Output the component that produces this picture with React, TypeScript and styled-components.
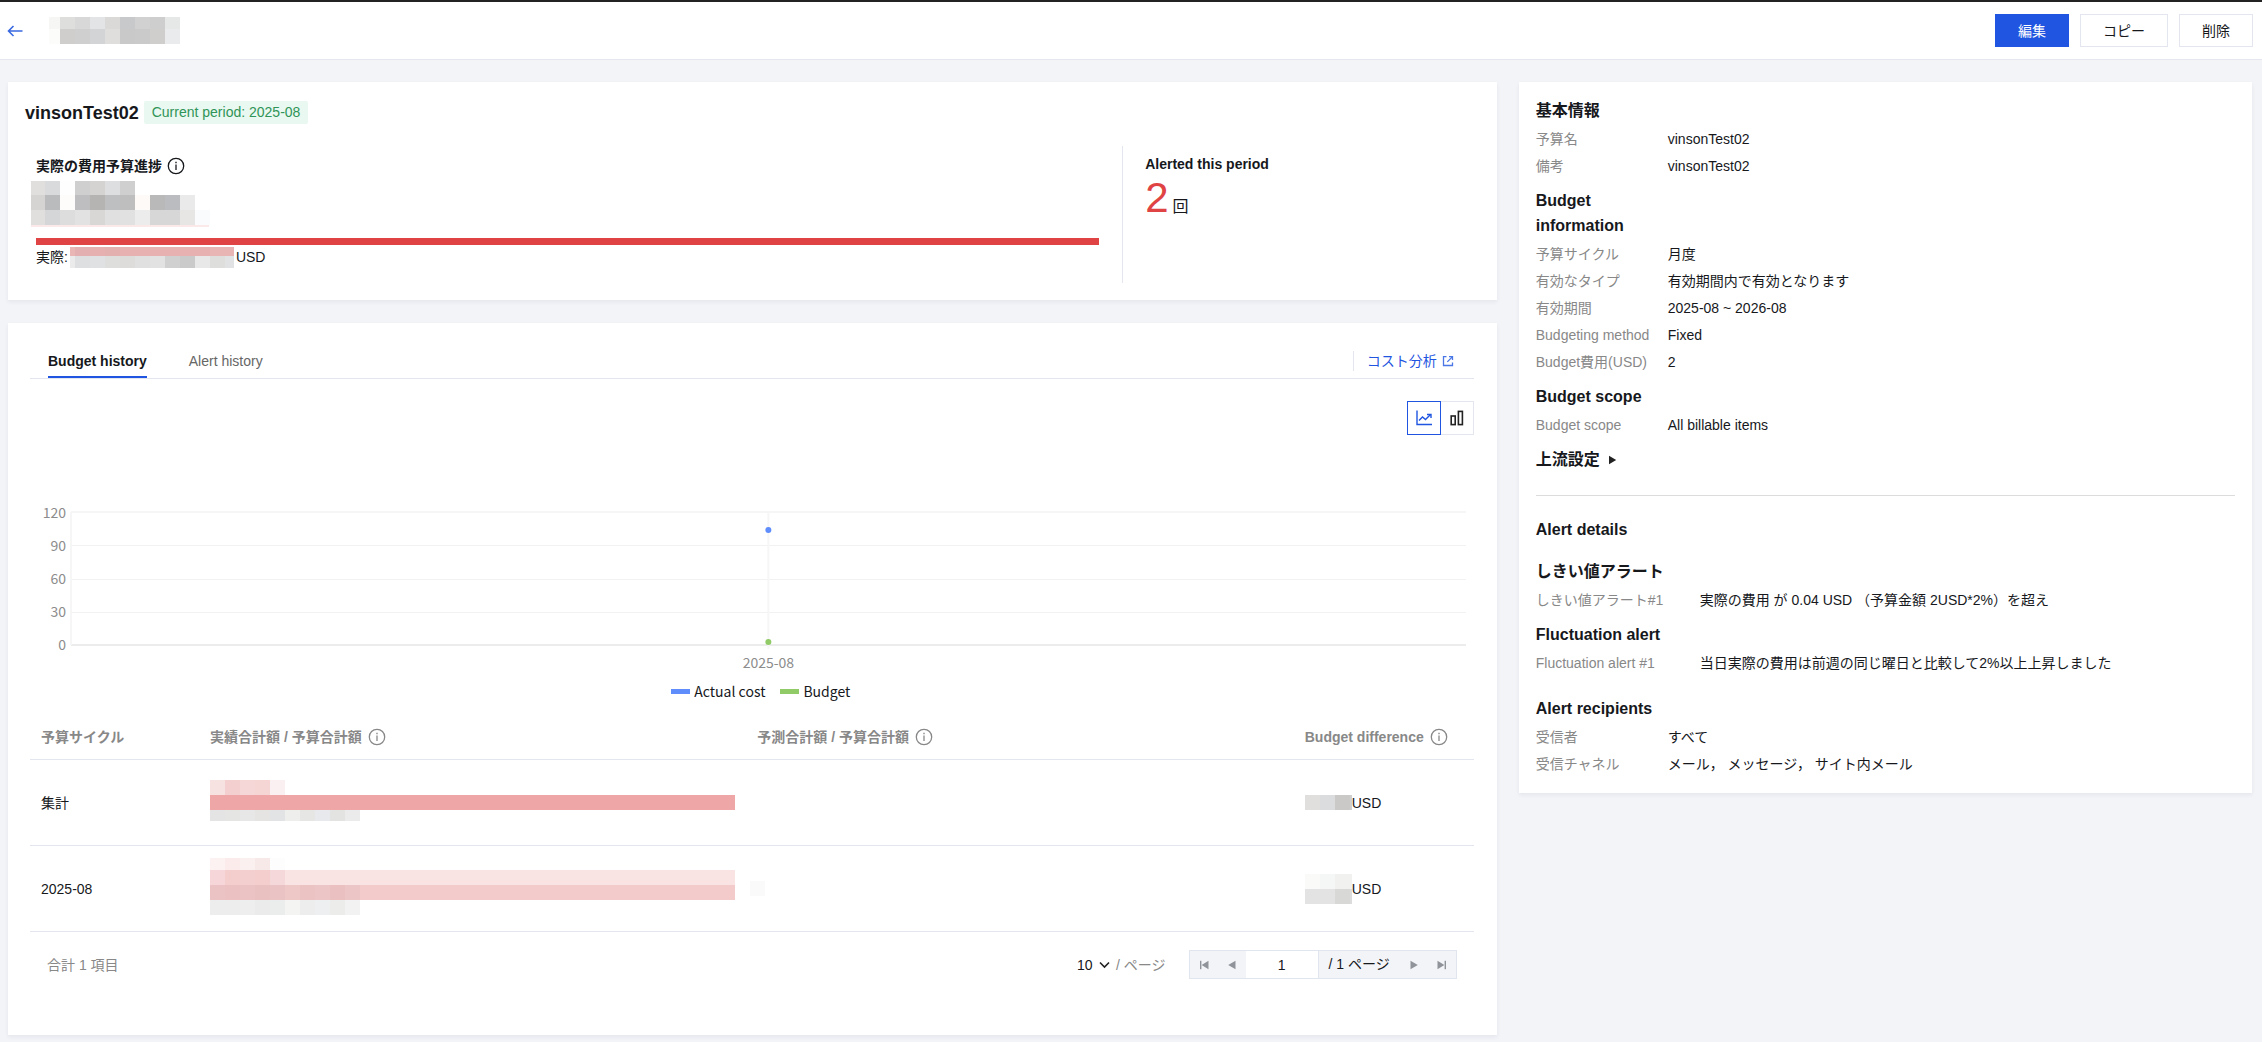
import React, { useState } from "react";
import styled, { createGlobalStyle } from "styled-components";

const GlobalStyle = createGlobalStyle`
  *, *::before, *::after { box-sizing: border-box; }
  body {
    margin: 0;
    background: #f3f4f8;
    color: #16181c;
    font-family: "Liberation Sans", "Noto Sans CJK JP", sans-serif;
    font-size: 14px;
    line-height: 20px;
  }
  button, input, select { font: inherit; color: inherit; }
  h1, h2, h3, dl, dd, p { margin: 0; }
`;

/* ---------- masked values ---------- */

type Cell = [width: number, color: string];
type MaskRow = [height: number, cells: Cell[]];

const MaskBox = styled.span<{ $fill?: boolean }>`
  display: inline-flex;
  flex-direction: column;
  flex: none;
  width: ${(p) => (p.$fill ? "100%" : "auto")};
`;
const MaskLine = styled.span<{ $h: number }>`
  display: flex;
  height: ${(p) => p.$h}px;
`;
const MaskCell = styled.span<{ $w: number; $c: string }>`
  flex: ${(p) => (p.$w ? `0 0 ${p.$w}px` : "1 1 0")};
  background: ${(p) => p.$c};
`;

const Mask = ({ rows, fill }: { rows: MaskRow[]; fill?: boolean }) => (
  <MaskBox $fill={fill} aria-hidden="true">
    {rows.map(([h, cells], i) => (
      <MaskLine key={i} $h={h}>
        {cells.map(([w, c], j) => (
          <MaskCell key={j} $w={w} $c={c} />
        ))}
      </MaskLine>
    ))}
  </MaskBox>
);

const tiles = (first: number, ...colors: string[]): Cell[] =>
  colors.map((c, i) => [i === 0 ? first : 15, c]);

const titleMask: MaskRow[] = [
  [12, tiles(11, "#f6f6f4", "#dededc", "#d8d8d8", "#e2e4e6", "#dad9d7", "#c8c9cb", "#d1d1d1", "#cecece", "#e6e8e7")],
  [15, tiles(11, "#fcfcfa", "#cfcecc", "#cfcfcf", "#d3d4d6", "#dfdedd", "#c9c9c9", "#cacaca", "#cfcecc", "#e9ebec")],
];
const amountMask: MaskRow[] = [
  [14, tiles(14, "#e0dfde", "#d8dadb", "#fefefe", "#cfcfcf", "#d4d3d1", "#dddee0", "#cfcfcf")],
  [15, tiles(14, "#d5d4d2", "#babbbd", "#fdfcfb", "#bebec0", "#b5b4b2", "#bebfc1", "#bebebf", "#fefaf7", "#b9b9b9", "#bbbcc0", "#eaeaea")],
  [15, tiles(14, "#e0dfde", "#d4d6d8", "#dddddd", "#e2e2e2", "#d8d7d5", "#e0e0e0", "#e1e1e1", "#ececec", "#d7d7d7", "#d7d7d7", "#e7e6e5", "#fafbfd")],
  [2, [[178, "#fbe8e8"]]],
];
const actualMask: MaskRow[] = [
  [9, [[5, "#e9b5b5"], [15, "#e4afb0"], [15, "#e6b0b0"], [15, "#e4afaf"], [90, "#e7b1b1"], [24, "#e8b4b4"]]],
  [12, [[5, "#ebebeb"], [15, "#dedfe1"], [15, "#e0e1e3"], [15, "#dededd"], [15, "#dddcdb"], [15, "#e0e0e0"], [15, "#e2e2e2"], [15, "#d1d0d1"], [15, "#cacacb"], [15, "#e9e8e8"], [15, "#dededd"], [9, "#e1e2e3"]]],
];
const totalMask: MaskRow[] = [
  [15, tiles(15, "#f7e2e2", "#f4cfcf", "#f6d7d8", "#f5d6d5", "#fbf0f1")],
  [15, [[0, "#efa6a6"]]],
  [11, tiles(15, "#e4e4e4", "#e5e5e3", "#e7e7e7", "#e5e4e3", "#e1e3e5", "#eeeeed", "#e6e6e4", "#e8e9ec", "#e3e4e2", "#ebebeb")],
];
const monthMask: MaskRow[] = [
  [12, tiles(15, "#fdf2f2", "#fbebeb", "#fbf0f0", "#f8e9e9", "#fefdfd")],
  [15, [...tiles(15, "#f6d6d8", "#f4cdcd", "#f4cfcf", "#f4cdcd", "#f5d8d9"), [0, "#f9e4e3"]]],
  [15, [...tiles(15, "#ecc3c5", "#ebc1c1", "#ecc3c4", "#eac1c1", "#eac3c4", "#eec7c7", "#ebc3c3", "#ecc5c6", "#eac0c0", "#ecc6c6"), [0, "#f4cbcb"]]],
  [15, tiles(15, "#ededed", "#ededed", "#eeeeee", "#ebebeb", "#ebecec", "#f4f4f3", "#ededed", "#eeeff1", "#ececea", "#f2f2f2")],
];
const forecastMask: MaskRow[] = [[15, [[15, "#fafafa"]]]];
const totalDiffMask: MaskRow[] = [
  [15, [[15, "#e0dfdd"], [15, "#dadcde"], [15, "#cac9c8"], [2, "#cfcfcf"]]],
];
const monthDiffMask: MaskRow[] = [
  [15, [[15, "#fafaf9"], [15, "#f5f7f7"], [17, "#f1f1f0"]]],
  [15, [[30, "#e3e3e3"], [15, "#d8d8d6"], [2, "#dcdcdc"]]],
];

/* ---------- icons ---------- */

const Glyph = styled.svg`
  display: block;
  flex: none;
`;

const InfoIcon = ({ size = 18 }: { size?: number }) => (
  <Glyph width={size} height={size} viewBox="0 0 18 18" fill="none" stroke="currentColor">
    <circle cx="9" cy="9" r="7.7" strokeWidth="1.3" />
    <path d="M9 7.5V13" strokeWidth="1.3" />
    <path d="M9 4.7V6.3" strokeWidth="1.4" />
  </Glyph>
);

const BackIcon = () => (
  <Glyph width="16" height="14" viewBox="0 0 16 14" fill="none" stroke="#3a68e0" strokeWidth="1.6">
    <path d="M15.5 7H1.8M6.5 2L1.5 7L6.5 12" />
  </Glyph>
);

const ExternalIcon = () => (
  <Glyph width="12" height="12" viewBox="0 0 12 12" fill="none" stroke="#4a76e6" strokeWidth="1.3">
    <path d="M4.5 1.7H1.5V10.5H10.5V7.5" />
    <path d="M7 1.7H10.5V5M10.3 1.9L5.3 6.9" />
  </Glyph>
);

const LineIcon = () => (
  <Glyph width="18" height="18" viewBox="0 0 18 18" fill="none" stroke="currentColor" strokeWidth="1.4">
    <path d="M2 1.5V15.5H17" />
    <path d="M4 11.5L7.5 8L10.5 10.5L15.5 5.5" />
    <path d="M12 5.5H16V9" />
  </Glyph>
);

const BarIcon = () => (
  <Glyph width="16" height="18" viewBox="0 0 16 18" fill="none" stroke="currentColor" strokeWidth="1.6">
    <rect x="2.2" y="7" width="4" height="8.6" />
    <rect x="9.4" y="2.4" width="4" height="13.2" />
  </Glyph>
);

const PagerIcon = ({ back, edge }: { back?: boolean; edge?: boolean }) => (
  <Glyph width="10" height="10" viewBox="0 0 10 10" fill="currentColor" transform={back ? "scale(-1 1)" : undefined}>
    <path d={edge ? "M0.5 0.8V9.2L7.4 5Z" : "M1.5 0.8V9.2L8.8 5Z"} />
    {edge && <rect x="7.6" y="0.8" width="1.4" height="8.4" />}
  </Glyph>
);

const ChevronIcon = styled(Glyph)`
  margin-left: 6px;
  pointer-events: none;
`;

/* ---------- header ---------- */

const TopBar = styled.header`
  display: flex;
  align-items: center;
  height: 60px;
  padding: 0 9px 0 7px;
  background: #fff;
  border-top: 2px solid #232323;
  border-bottom: 1px solid #e4e7ee;
`;
const BackLink = styled.a`
  display: block;
  margin-right: 26px;
`;
const Actions = styled.div`
  display: flex;
  gap: 11px;
  margin-left: auto;
`;
const ActionButton = styled.button<{ $primary?: boolean }>`
  height: 33px;
  padding: 0 22px;
  border: 1px solid ${(p) => (p.$primary ? "#1f55e0" : "#e3e6ee")};
  background: ${(p) => (p.$primary ? "#1f55e0" : "#fff")};
  color: ${(p) => (p.$primary ? "#fff" : "inherit")};
`;

/* ---------- page frame ---------- */

const Page = styled.main`
  display: grid;
  grid-template-columns: 67fr 33fr;
  align-items: start;
  gap: 22px;
  padding: 22px 10px 7px 8px;
`;
const Column = styled.div`
  display: grid;
  gap: 23px;
  min-width: 0;
`;
const Card = styled.section`
  background: #fff;
  box-shadow: 0 2px 4px rgba(54, 58, 80, 0.07);
  min-width: 0;
`;

/* ---------- summary card ---------- */

const SummaryCard = styled(Card)`
  padding: 18px 22px 17px 17px;
`;
const TitleRow = styled.div`
  display: flex;
  align-items: center;
  gap: 5px;
  height: 25px;
`;
const Title = styled.h1`
  font-size: 18px;
  line-height: 24px;
`;
const Tag = styled.span`
  padding: 0 8px;
  line-height: 23px;
  border-radius: 2px;
  background: #e9f8f1;
  color: #2f9457;
`;
const SummaryBody = styled.div`
  display: grid;
  grid-template-columns: 303fr 97fr;
  margin-top: 21px;
`;
const Progress = styled.div`
  padding: 10px 23px 0 11px;
  min-height: 137px;
  border-right: 1px solid #e3e5ef;
`;
const SubTitle = styled.h2`
  display: flex;
  align-items: center;
  gap: 5px;
  font-size: 14px;
  line-height: 20px;
`;
const Amount = styled.div`
  display: flex;
  margin: 5px 0 11px -5px;
`;
const ProgressBar = styled.div`
  height: 7px;
  background: #e04343;
`;
const ActualLine = styled.div`
  display: flex;
  align-items: center;
  gap: 2px;
  height: 24px;
`;
const Alerted = styled.div`
  padding: 8px 0 0 22px;
`;
const AlertCount = styled.p`
  display: flex;
  align-items: baseline;
  gap: 4px;
  font-size: 16px;
  line-height: 48px;
`;
const CountNumber = styled.span`
  font-size: 42px;
  color: #e04343;
`;

/* ---------- history card ---------- */

const HistoryCard = styled(Card)`
  padding: 22px 23px 56px 22px;
`;
const TabBar = styled.div`
  display: flex;
  height: 34px;
  padding: 0 20px 0 18px;
  border-bottom: 1px solid #e3e6ef;
`;
const TabList = styled.div`
  display: flex;
  gap: 42px;
`;
const Tab = styled.button<{ $on: boolean }>`
  padding: 0;
  border: 0;
  border-bottom: 2px solid ${(p) => (p.$on ? "#1f55e0" : "transparent")};
  background: none;
  color: ${(p) => (p.$on ? "#16181c" : "#666")};
  font-weight: ${(p) => (p.$on ? 700 : 400)};
`;
const CostLink = styled.a`
  display: flex;
  align-items: center;
  gap: 5px;
  height: 20px;
  margin: 6px 0 0 auto;
  padding-left: 13px;
  border-left: 1px solid #e3e6ee;
  color: #1f55e0;
  text-decoration: none;
`;
const Toggles = styled.div`
  display: flex;
  justify-content: flex-end;
  margin-top: 22px;
`;
const ToggleButton = styled.button<{ $on: boolean }>`
  display: grid;
  place-items: center;
  z-index: ${(p) => (p.$on ? 1 : 0)};
  width: 34px;
  height: 34px;
  padding: 0;
  border: 1px solid ${(p) => (p.$on ? "#1f55e0" : "#e3e6ee")};
  background: #fff;
  color: ${(p) => (p.$on ? "#1f55e0" : "#222")};
  & + & { margin-left: -1px; }
`;

const Chart = styled.figure`
  display: flex;
  gap: 5px;
  margin: 67px 0 0;
  padding-right: 8px;
  font-family: "Noto Sans CJK SC", sans-serif;
  color: #8c8c8c;
`;
const YAxis = styled.div`
  display: flex;
  flex-direction: column;
  justify-content: space-between;
  width: 36px;
  height: 152px;
  text-align: right;
`;
const Plot = styled.div`
  flex: 1;
  min-width: 0;
  padding-top: 9px;
`;
const PlotSvg = styled.svg`
  display: block;
  width: 100%;
  height: 139px;
  overflow: visible;
`;
const XLabel = styled.div`
  margin-top: 2px;
  text-align: center;
`;
const Legend = styled.div`
  display: flex;
  justify-content: center;
  gap: 15px;
  margin-top: 9px;
  padding-left: 18px;
  font-family: "Noto Sans CJK SC", sans-serif;
`;
const LegendItem = styled.span<{ $c: string }>`
  display: flex;
  align-items: center;
  gap: 4px;
  &::before {
    content: "";
    width: 19px;
    height: 5px;
    background: ${(p) => p.$c};
  }
`;

const Table = styled.table`
  width: 100%;
  margin-top: 14px;
  border-spacing: 0;
  table-layout: fixed;
`;
const Col = styled.col<{ $w?: string }>`
  width: ${(p) => p.$w ?? "auto"};
`;
const Th = styled.th`
  height: 45px;
  padding: 0 11px;
  border-bottom: 1px solid #e3e5ef;
  color: #888;
  text-align: left;
`;
const ThInner = styled.span`
  display: flex;
  align-items: center;
  gap: 6px;
`;
const cellPadding = { text: "0 11px", bar: "0 11px 4px", flush: "0 4px" };
const Td = styled.td<{ $kind?: keyof typeof cellPadding }>`
  height: 86px;
  padding: ${(p) => cellPadding[p.$kind ?? "text"]};
  border-bottom: 1px solid #e3e5ef;
  line-height: 0;
`;
const CellText = styled.span`
  display: flex;
  align-items: center;
  line-height: 20px;
`;

const Footer = styled.div`
  display: flex;
  align-items: center;
  margin-top: 18px;
  padding: 0 17px;
  color: #888;
`;
const PageSize = styled.label`
  display: flex;
  align-items: center;
  margin-left: auto;
`;
const SizeSelect = styled.select`
  appearance: none;
  padding: 0;
  border: 0;
  background: none;
  color: #16181c;
`;
const SizeUnit = styled.span`
  margin: 0 23px 0 6px;
`;
const Pager = styled.nav`
  display: flex;
  height: 29px;
  border: 1px solid #e1e5ee;
  background: #f2f4f8;
  color: #16181c;
  > * + * { border-left: 1px solid #e1e5ee; }
`;
const PagerButton = styled.button`
  display: grid;
  place-items: center;
  width: 28px;
  padding: 0;
  border: 0;
  background: none;
  color: #909399;
`;
const PagerInput = styled.input`
  width: 72px;
  padding: 0;
  border: 0;
  background: #fff;
  text-align: center;
`;
const PagerText = styled.span`
  padding: 0 10px;
  line-height: 27px;
`;

/* ---------- info card ---------- */

const InfoCard = styled(Card)`
  padding: 8px 17px 15px;
`;
const InfoTitle = styled.h3<{ $gap?: number }>`
  max-width: 132px;
  margin: ${(p) => p.$gap ?? 8}px 0 3px;
  font-size: 16px;
  line-height: 25px;
`;
const Fields = styled.dl<{ $label: number }>`
  display: grid;
  grid-template-columns: ${(p) => p.$label}px 1fr;
  line-height: 27px;
`;
const FieldName = styled.dt`
  color: #888;
`;
const Disclosure = styled.button`
  display: flex;
  align-items: center;
  gap: 8px;
  margin-top: 8px;
  padding: 0;
  border: 0;
  background: none;
  font-size: 16px;
  font-weight: 700;
  line-height: 25px;
`;
const Rule = styled.hr`
  margin: 23px 0 21px;
  border: 0;
  border-top: 1px solid #dcdcdc;
`;

const FieldList = ({ items, label = 132 }: { items: [string, string][]; label?: number }) => (
  <Fields $label={label}>
    {items.map(([name, value]) => (
      <React.Fragment key={name}>
        <FieldName>{name}</FieldName>
        <dd>{value}</dd>
      </React.Fragment>
    ))}
  </Fields>
);

const gridLines = [1, 34, 68, 101, 134];

export default function App() {
  const [tab, setTab] = useState("budget");
  const [view, setView] = useState("line");
  const [page, setPage] = useState("1");

  return (
    <>
      <GlobalStyle />
      <TopBar>
        <BackLink href="#" aria-label="戻る">
          <BackIcon />
        </BackLink>
        <Mask rows={titleMask} />
        <Actions>
          <ActionButton $primary>編集</ActionButton>
          <ActionButton>コピー</ActionButton>
          <ActionButton>削除</ActionButton>
        </Actions>
      </TopBar>

      <Page>
        <Column>
          <SummaryCard>
            <TitleRow>
              <Title>vinsonTest02</Title>
              <Tag>Current period: 2025-08</Tag>
            </TitleRow>
            <SummaryBody>
              <Progress>
                <SubTitle>
                  実際の費用予算進捗 <InfoIcon />
                </SubTitle>
                <Amount>
                  <Mask rows={amountMask} />
                </Amount>
                <ProgressBar />
                <ActualLine>
                  <span>実際:</span>
                  <Mask rows={actualMask} />
                  <span>USD</span>
                </ActualLine>
              </Progress>
              <Alerted>
                <SubTitle>Alerted this period</SubTitle>
                <AlertCount>
                  <CountNumber>2</CountNumber>回
                </AlertCount>
              </Alerted>
            </SummaryBody>
          </SummaryCard>

          <HistoryCard>
            <TabBar>
              <TabList role="tablist">
                <Tab role="tab" aria-selected={tab === "budget"} $on={tab === "budget"} onClick={() => setTab("budget")}>
                  Budget history
                </Tab>
                <Tab role="tab" aria-selected={tab === "alert"} $on={tab === "alert"} onClick={() => setTab("alert")}>
                  Alert history
                </Tab>
              </TabList>
              <CostLink href="#">
                コスト分析 <ExternalIcon />
              </CostLink>
            </TabBar>

            <Toggles>
              <ToggleButton aria-label="折れ線グラフ" $on={view === "line"} onClick={() => setView("line")}>
                <LineIcon />
              </ToggleButton>
              <ToggleButton aria-label="棒グラフ" $on={view === "bar"} onClick={() => setView("bar")}>
                <BarIcon />
              </ToggleButton>
            </Toggles>

            <Chart>
              <YAxis>
                {[120, 90, 60, 30, 0].map((v) => (
                  <span key={v}>{v}</span>
                ))}
              </YAxis>
              <Plot>
                <PlotSvg>
                  {gridLines.map((y, i) => (
                    <line key={y} x1="0" x2="100%" y1={y} y2={y} stroke={i === 4 ? "#ececec" : i === 0 ? "#f6f6f6" : "#f2f2f2"} strokeWidth={i === 0 || i === 4 ? 2 : 1} shapeRendering="crispEdges" />
                  ))}
                  <line x1="0" x2="0" y1="1" y2="134" stroke="#f6f6f6" strokeWidth="2" />
                  <line x1="50%" x2="50%" y1="1" y2="138" stroke="#f6f6f6" strokeWidth="2" />
                  <circle cx="50%" cy="19" r="3" fill="#5f8dfb" />
                  <circle cx="50%" cy="131" r="3" fill="#91cb68" />
                </PlotSvg>
                <XLabel>2025-08</XLabel>
              </Plot>
            </Chart>
            <Legend>
              <LegendItem $c="#5f8dfb">Actual cost</LegendItem>
              <LegendItem $c="#91cb68">Budget</LegendItem>
            </Legend>

            <Table>
              <colgroup>
                <Col $w="169px" />
                <Col />
                <Col />
                <Col $w="180px" />
              </colgroup>
              <thead>
                <tr>
                  <Th>予算サイクル</Th>
                  <Th>
                    <ThInner>実績合計額 / 予算合計額 <InfoIcon /></ThInner>
                  </Th>
                  <Th>
                    <ThInner>予測合計額 / 予算合計額 <InfoIcon /></ThInner>
                  </Th>
                  <Th>
                    <ThInner>Budget difference <InfoIcon /></ThInner>
                  </Th>
                </tr>
              </thead>
              <tbody>
                <tr>
                  <Td><CellText>集計</CellText></Td>
                  <Td $kind="bar"><Mask rows={totalMask} fill /></Td>
                  <Td />
                  <Td>
                    <CellText><Mask rows={totalDiffMask} />USD</CellText>
                  </Td>
                </tr>
                <tr>
                  <Td><CellText>2025-08</CellText></Td>
                  <Td $kind="bar"><Mask rows={monthMask} fill /></Td>
                  <Td $kind="flush"><Mask rows={forecastMask} /></Td>
                  <Td>
                    <CellText><Mask rows={monthDiffMask} />USD</CellText>
                  </Td>
                </tr>
              </tbody>
            </Table>

            <Footer>
              <span>合計 1 項目</span>
              <PageSize>
                <SizeSelect defaultValue="10">
                  <option>10</option>
                  <option>20</option>
                </SizeSelect>
                <ChevronIcon width="11" height="8" viewBox="0 0 11 8" fill="none" stroke="#222" strokeWidth="1.6">
                  <path d="M1 1.5L5.5 6L10 1.5" />
                </ChevronIcon>
                <SizeUnit>/ ページ</SizeUnit>
              </PageSize>
              <Pager>
                <PagerButton aria-label="最初"><PagerIcon back edge /></PagerButton>
                <PagerButton aria-label="前へ"><PagerIcon back /></PagerButton>
                <PagerInput aria-label="ページ番号" value={page} onChange={(e) => setPage(e.target.value)} />
                <PagerText>/ 1 ページ</PagerText>
                <PagerButton aria-label="次へ"><PagerIcon /></PagerButton>
                <PagerButton aria-label="最後"><PagerIcon edge /></PagerButton>
              </Pager>
            </Footer>
          </HistoryCard>
        </Column>

        <InfoCard>
          <InfoTitle>基本情報</InfoTitle>
          <FieldList items={[["予算名", "vinsonTest02"], ["備考", "vinsonTest02"]]} />
          <InfoTitle>Budget information</InfoTitle>
          <FieldList
            items={[
              ["予算サイクル", "月度"],
              ["有効なタイプ", "有効期間内で有効となります"],
              ["有効期間", "2025-08 ~ 2026-08"],
              ["Budgeting method", "Fixed"],
              ["Budget費用(USD)", "2"],
            ]}
          />
          <InfoTitle>Budget scope</InfoTitle>
          <FieldList items={[["Budget scope", "All billable items"]]} />
          <Disclosure aria-expanded="false">
            上流設定
            <Glyph width="9" height="10" viewBox="0 0 9 10" fill="#222">
              <path d="M1 0.8V9.2L8.2 5Z" />
            </Glyph>
          </Disclosure>
          <Rule />
          <InfoTitle>Alert details</InfoTitle>
          <InfoTitle $gap={17}>しきい値アラート</InfoTitle>
          <FieldList label={164} items={[["しきい値アラート#1", "実際の費用 が 0.04 USD （予算金額 2USD*2%）を超え"]]} />
          <InfoTitle>Fluctuation alert</InfoTitle>
          <FieldList label={164} items={[["Fluctuation alert #1", "当日実際の費用は前週の同じ曜日と比較して2%以上上昇しました"]]} />
          <InfoTitle $gap={19}>Alert recipients</InfoTitle>
          <FieldList items={[["受信者", "すべて"], ["受信チャネル", "メール， メッセージ， サイト内メール"]]} />
        </InfoCard>
      </Page>
    </>
  );
}
